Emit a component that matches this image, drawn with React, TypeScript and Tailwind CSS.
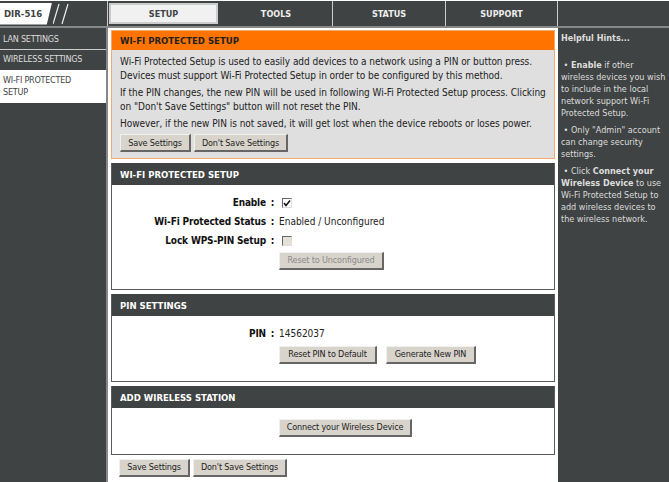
const font = "font-['DejaVu_Sans',sans-serif] [font-stretch:condensed]";

function Btn({ children, disabled, className = "" }: { children: React.ReactNode; disabled?: boolean; className?: string }) {
  return (
    <div
      className={`flex h-[18px] items-center justify-center whitespace-nowrap border-t border-l border-t-[#f0f0f0] border-l-[#f0f0f0] border-r-2 border-b-2 border-r-[#666666] border-b-[#666666] bg-[#d8d4cc] text-[9px] tracking-[-0.15px] ${
        disabled ? "text-[#8a8a8a]" : "text-[#222222]"
      } ${className}`}
    >
      {children}
    </div>
  );
}

function Section({ title, className, children }: { title: string; className: string; children?: React.ReactNode }) {
  return (
    <section className={`flex shrink-0 flex-col border-x border-b border-[#5a5a5a] bg-white ${className}`}>
      <h2 className="flex h-[22px] shrink-0 items-center bg-[#404343] pl-2 pt-[3px] text-[9.5px] font-bold text-white">{title}</h2>
      {children}
    </section>
  );
}

function Row({ label, children }: { label: string; children: React.ReactNode }) {
  return (
    <div className="flex h-[19px] items-center">
      <span className="w-[154px] text-right text-[10px] font-bold tracking-[-0.15px] text-[#111111]">{label}</span>
      <span className="w-[13px] text-center text-[10px] font-bold text-[#111111]">:</span>
      {children}
    </div>
  );
}

function Tab({ label, active, className }: { label: string; active?: boolean; className: string }) {
  return (
    <div
      className={`flex items-center justify-center pt-[2px] text-[9px] font-bold ${
        active ? "my-[2px] ml-px mr-[2px] border-2 border-[#cccccc] bg-[#f1f1f1] text-[#404343]" : "border-r border-[#cccccc] text-[#eeeeee]"
      } ${className}`}
    >
      {label}
    </div>
  );
}

function Check({ checked }: { checked?: boolean }) {
  return (
    <span className={`ml-[3px] flex h-[10px] w-[10px] items-center justify-center border-t border-l border-t-[#666666] border-l-[#666666] border-r border-b border-r-[#dddddd] border-b-[#dddddd] ${checked ? "bg-white" : "bg-[#e4e1da]"}`}>
      {checked && (
        <svg width="8" height="8" viewBox="0 0 8 8">
          <path d="M1 4 L3 6.5 L7 1.5" stroke="#111111" strokeWidth="1.5" fill="none" />
        </svg>
      )}
    </span>
  );
}

export default function App() {
  return (
    <div className={`flex h-[482px] w-[669px] flex-col overflow-hidden bg-white ${font}`}>
      <header className="mt-px flex h-[25px] shrink-0 bg-[#404343]">
        <div className="flex w-[108px] border-r border-[#cccccc]">
          <div className="flex h-[22px] w-[52px] items-center self-center bg-white pl-1 pt-px text-[9.5px] font-bold text-[#404343] [clip-path:polygon(0_0,100%_0,90%_100%,0_100%)]">
            DIR-516
          </div>
          <svg width="20" height="25" viewBox="0 0 20 25" className="ml-px">
            <path d="M0 23 L6 3 M9 23 L15 3" stroke="#eeeeee" strokeWidth="1.2" fill="none" />
          </svg>
        </div>
        <Tab label="SETUP" active className="w-[109px]" />
        <Tab label="TOOLS" className="w-[113px]" />
        <Tab label="STATUS" className="w-[113px]" />
        <Tab label="SUPPORT" className="w-[112px]" />
      </header>
      <div className="flex min-h-0 flex-1 border-t-2 border-[#888888]">
        <nav className="w-[108px] shrink-0 border-r-2 border-[#888888] bg-[#404343] text-[9px] tracking-[-0.25px] text-[#dddddd]">
          <div className="flex h-[22px] items-center border-b border-[#cccccc] pl-[3px] pt-[3px]">LAN SETTINGS</div>
          <div className="flex h-[20px] items-center pl-[3px]">WIRELESS SETTINGS</div>
          <div className="h-[33px] bg-white pl-[3px] pt-[4px] leading-[12px] text-[#404343]">
            WI-FI PROTECTED
            <br />
            SETUP
          </div>
        </nav>
        <main className="flex w-[450px] shrink-0 flex-col px-[3px] pt-[2px]">
          <section className="h-[129px] shrink-0 border border-[#f6a869] bg-[#dfdfdf]">
            <h1 className="flex h-[19px] items-center bg-[#ff7300] pl-2 pt-[2px] text-[9.5px] font-bold text-[#222222]">WI-FI PROTECTED SETUP</h1>
            <div className="pl-2 pt-[5px] text-[10px] leading-[14px] tracking-[-0.04px] text-[#222222]">
              <p className="whitespace-nowrap">Wi-Fi Protected Setup is used to easily add devices to a network using a PIN or button press.</p>
              <p className="whitespace-nowrap">Devices must support Wi-Fi Protected Setup in order to be configured by this method.</p>
              <p className="mt-[3px] whitespace-nowrap">If the PIN changes, the new PIN will be used in following Wi-Fi Protected Setup process. Clicking</p>
              <p className="whitespace-nowrap">on "Don't Save Settings" button will not reset the PIN.</p>
              <p className="mt-[3px] whitespace-nowrap">However, if the new PIN is not saved, it will get lost when the device reboots or loses power.</p>
              <div className="mt-[3px] flex gap-[3px]">
                <Btn className="w-[71px]">Save Settings</Btn>
                <Btn className="w-[94px]">Don't Save Settings</Btn>
              </div>
            </div>
          </section>
          <Section title="WI-FI PROTECTED SETUP" className="mt-[4px] h-[127px]">
            <div className="pt-[8px]">
              <Row label="Enable">
                <Check checked />
              </Row>
              <Row label="Wi-Fi Protected Status">
                <span className="text-[10px] text-[#222222]">Enabled / Unconfigured</span>
              </Row>
              <Row label="Lock WPS-PIN Setup">
                <Check />
              </Row>
              <div className="ml-[167px] mt-[2px]">
                <Btn disabled className="w-[105px]">Reset to Unconfigured</Btn>
              </div>
            </div>
          </Section>
          <Section title="PIN SETTINGS" className="mt-[4px] h-[88px]">
            <div className="pt-[8px]">
              <Row label="PIN">
                <span className="text-[10px] text-[#222222]">14562037</span>
              </Row>
              <div className="ml-[167px] mt-[3px] flex gap-[9px]">
                <Btn className="w-[98px]">Reset PIN to Default</Btn>
                <Btn className="w-[90px]">Generate New PIN</Btn>
              </div>
            </div>
          </Section>
          <Section title="ADD WIRELESS STATION" className="mt-[4px] h-[69px]">
            <div className="ml-[167px] mt-[11px]">
              <Btn className="w-[133px]">Connect your Wireless Device</Btn>
            </div>
          </Section>
          <div className="ml-[8px] mt-[4px] flex gap-[3px]">
            <Btn className="w-[71px]">Save Settings</Btn>
            <Btn className="w-[94px]">Don't Save Settings</Btn>
          </div>
        </main>
        <aside className="flex-1 whitespace-nowrap bg-[#404343] pl-[3px] pt-[4px] text-[9px] leading-[12px] text-[#dddddd]">
          <p className="font-bold">Helpful Hints...</p>
          <p className="mt-[15px]">
            &nbsp;• <b>Enable</b> if other
            <br />
            wireless devices you wish
            <br />
            to include in the local
            <br />
            network support Wi-Fi
            <br />
            Protected Setup.
          </p>
          <p className="mt-[5px]">
            &nbsp;• Only "Admin" account
            <br />
            can change security
            <br />
            settings.
          </p>
          <p className="mt-[5px]">
            &nbsp;• Click <b>Connect your</b>
            <br />
            <b>Wireless Device</b> to use
            <br />
            Wi-Fi Protected Setup to
            <br />
            add wireless devices to
            <br />
            the wireless network.
          </p>
        </aside>
      </div>
    </div>
  );
}
